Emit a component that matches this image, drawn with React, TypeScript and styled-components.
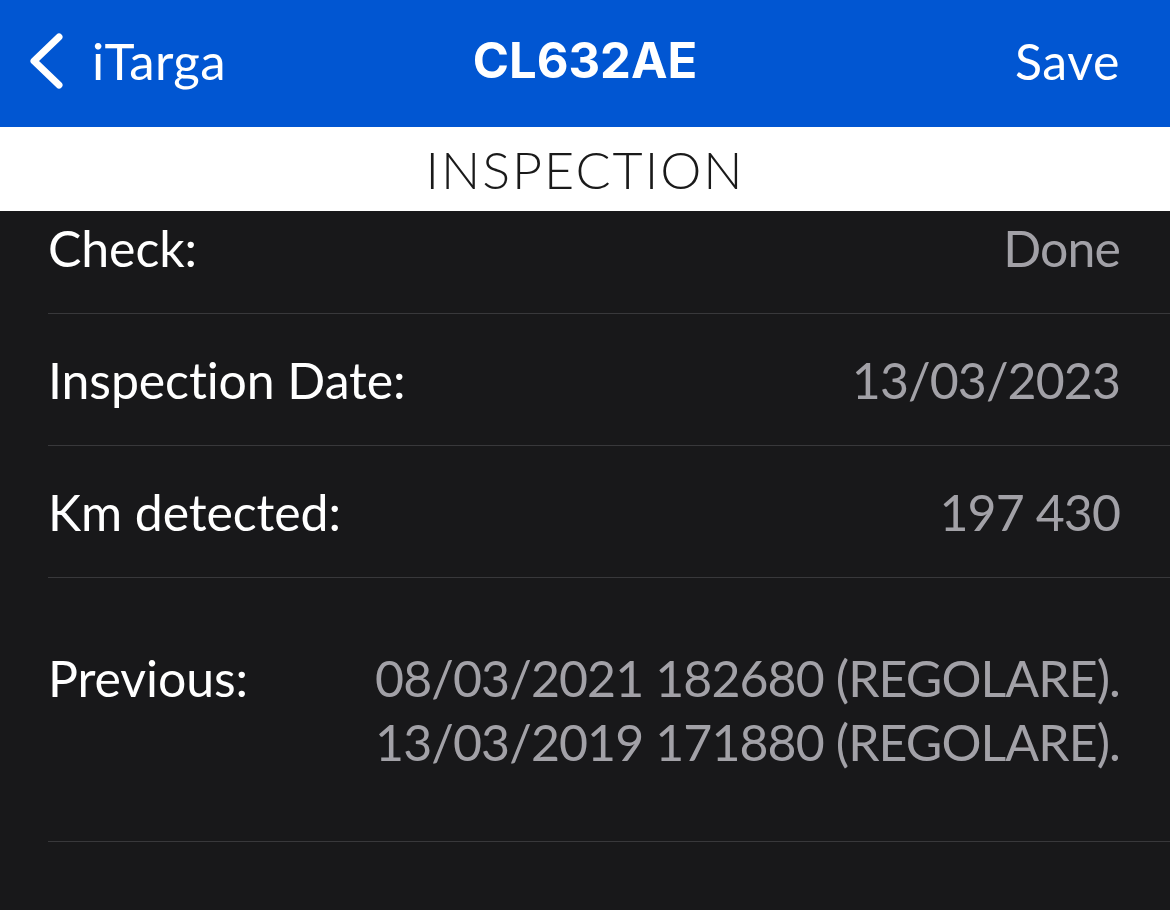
import styled, { createGlobalStyle } from "styled-components";

const Global = createGlobalStyle`
	html, body {
		margin: 0;
		padding: 0;
		background: #18181a;
	}
	#root {
		min-height: 910px;
	}
`;

const Screen = styled.div`
	width: 1170px;
	height: 910px;
	overflow: hidden;
	background: #18181a;
	display: flex;
	flex-direction: column;
	font-family: Lato, "Noto Sans", sans-serif;
`;

const NavBar = styled.header`
	height: 127px;
	box-sizing: border-box;
	background: #0156d2;
	display: grid;
	grid-template-columns: 1fr auto 1fr;
	align-items: center;
	padding: 0 50px 6px 50px;
	color: #ffffff;
`;

const BackBtn = styled.div`
	display: flex;
	align-items: center;
	gap: 28px;
	margin-left: -22px;
	font-size: 51px;
	letter-spacing: 0.4px;
`;

const NavTitle = styled.h1`
	margin: 0;
	font-family: Inter, "Liberation Sans", sans-serif;
	font-weight: 700;
	font-size: 49px;
	letter-spacing: 0;
`;

const SaveBtn = styled.span`
	justify-self: end;
	font-size: 50px;
	letter-spacing: 0.6px;
`;

const Section = styled.div`
	height: 84px;
	background: #ffffff;
	color: #1a1a1a;
	display: flex;
	align-items: center;
	justify-content: center;
	font-size: 52px;
	font-weight: 300;
	letter-spacing: 2px;
`;

const List = styled.div`
	display: flex;
	flex-direction: column;
	padding-left: 48px;
`;

const Row = styled.div<{ h: number; cut?: number }>`
	height: ${p => p.h}px;
	box-sizing: border-box;
	padding: 0 50px ${p => p.cut ?? 0}px 0;
	border-bottom: 1px solid #38383b;
	display: flex;
	align-items: center;
	justify-content: space-between;
	font-size: 50px;
`;

const Label = styled.span`
	color: #ffffff;
	letter-spacing: -0.1px;
`;

const Value = styled.span`
	color: #a2a1a7;
	text-align: right;
	line-height: 64px;
	letter-spacing: -0.9px;
`;

const TopLabel = styled(Label)`
	align-self: flex-start;
	margin-top: 68px;
	line-height: 64px;
`;

const MultiValue = styled(Value)`
	align-self: flex-start;
	margin-top: 68px;
`;

function Chevron() {
	return (
		<svg width="36" height="58" viewBox="0 0 36 58">
			<path d="M31 5 L6 29 L31 53" fill="none" stroke="#fff" strokeWidth="7" strokeLinecap="round" strokeLinejoin="round" />
		</svg>
	);
}

export default function App() {
	return (
		<Screen>
			<Global />
			<NavBar>
				<BackBtn>
					<Chevron />
					<span>iTarga</span>
				</BackBtn>
				<NavTitle>CL632AE</NavTitle>
				<SaveBtn>Save</SaveBtn>
			</NavBar>
			<Section>INSPECTION</Section>
			<List>
				<Row h={103} cut={29}>
					<Label>Check:</Label>
					<Value>Done</Value>
				</Row>
				<Row h={132}>
					<Label>Inspection Date:</Label>
					<Value>13/03/2023</Value>
				</Row>
				<Row h={132}>
					<Label>Km detected:</Label>
					<Value>197 430</Value>
				</Row>
				<Row h={264}>
					<TopLabel>Previous:</TopLabel>
					<MultiValue>
						08/03/2021 182680 (REGOLARE).
						<br />
						13/03/2019 171880 (REGOLARE).
					</MultiValue>
				</Row>
			</List>
		</Screen>
	);
}
